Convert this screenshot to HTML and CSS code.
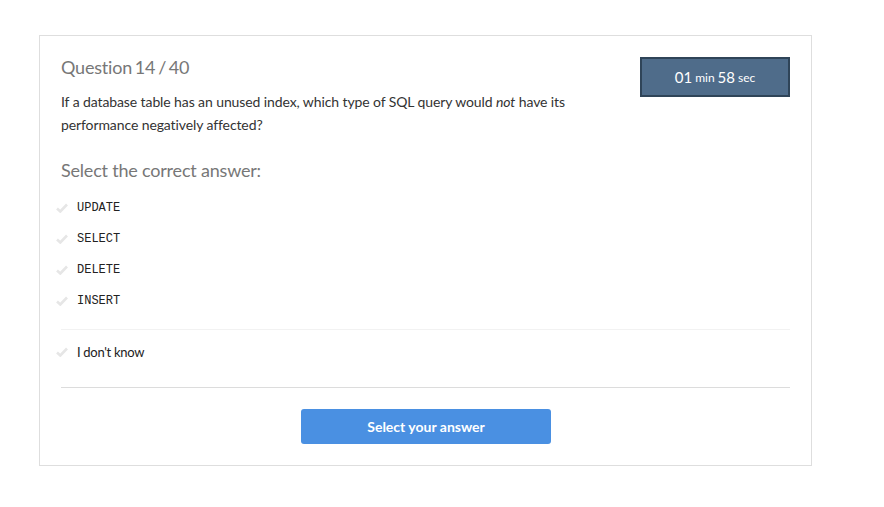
FILE: index.html
```html
<!DOCTYPE html>
<html>
<head>
<meta charset="utf-8">
<link rel="stylesheet" href="styles.css">
</head>
<body>
<div class="card">
  <div class="head">
    <div class="qtext">
      <h1 class="title">Question 14 / 40</h1>
      <p class="prompt">If a database table has an unused index, which type of SQL query would <em>not</em> have its performance negatively affected?</p>
    </div>
    <div class="timer"><span class="num">01</span> <span class="unit">min</span> <span class="num">58</span> <span class="unit">sec</span></div>
  </div>
  <h2 class="sub">Select the correct answer:</h2>
  <ul class="opts">
    <li class="opt"><svg class="chk" viewBox="0 0 12 10"><path d="M1 5.5 L4.3 8.5 L11 1.5" fill="none" stroke="#e6e6e6" stroke-width="2.6"/></svg><span class="code">UPDATE</span></li>
    <li class="opt"><svg class="chk" viewBox="0 0 12 10"><path d="M1 5.5 L4.3 8.5 L11 1.5" fill="none" stroke="#e6e6e6" stroke-width="2.6"/></svg><span class="code">SELECT</span></li>
    <li class="opt"><svg class="chk" viewBox="0 0 12 10"><path d="M1 5.5 L4.3 8.5 L11 1.5" fill="none" stroke="#e6e6e6" stroke-width="2.6"/></svg><span class="code">DELETE</span></li>
    <li class="opt"><svg class="chk" viewBox="0 0 12 10"><path d="M1 5.5 L4.3 8.5 L11 1.5" fill="none" stroke="#e6e6e6" stroke-width="2.6"/></svg><span class="code">INSERT</span></li>
  </ul>
  <div class="dontknow">
    <div class="opt"><svg class="chk" viewBox="0 0 12 10"><path d="M1 5.5 L4.3 8.5 L11 1.5" fill="none" stroke="#e6e6e6" stroke-width="2.6"/></svg><span class="dk">I don't know</span></div>
  </div>
  <div class="foot">
    <button class="btn">Select your answer</button>
  </div>
</div>
</body>
</html>
```
FILE: styles.css
```css
html, body { margin: 0; padding: 0; background: #fff; }
body { font-family: Lato, "Open Sans", sans-serif; color: #333; }
.card {
  box-sizing: border-box;
  width: 773px;
  height: 431px;
  margin: 35px 0 0 39px;
  border: 1px solid #dedede;
  padding: 0 21px 0 21px;
}
.head { display: flex; justify-content: space-between; align-items: flex-start; }
.qtext { width: 545px; }
.title {
  margin: 19px 0 0 0;
  font-size: 18px;
  font-weight: 400;
  color: #777;
  line-height: 24px;
  letter-spacing: -0.2px;
  word-spacing: -1.6px;
}
.prompt {
  margin: 11px 0 0 0;
  font-size: 14px;
  line-height: 23px;
  color: #333;
  letter-spacing: -0.1px;
}
.timer {
  box-sizing: border-box;
  width: 150px;
  height: 40px;
  margin-top: 21px;
  background: #4f6c8a;
  border: 2px solid #2f4458;
  color: #fff;
  display: flex;
  align-items: center;
  justify-content: center;
  gap: 3px;
  white-space: pre;
}
.timer .num { font-size: 15px; }
.timer .unit { font-size: 12px; }
.sub {
  margin: 22px 0 0 0;
  font-size: 18px;
  font-weight: 400;
  color: #777;
  line-height: 24px;
  letter-spacing: -0.2px;
}
.opts { list-style: none; margin: 10px 0 0 0; padding: 0; }
.opt {
  display: flex;
  align-items: center;
  height: 31px;
  margin-left: -5px;
}
.chk { width: 12px; height: 10px; margin-right: 9px; }
.code { font-family: "Liberation Mono", "DejaVu Sans Mono", monospace; font-size: 12px; color: #222; }
.dontknow {
  margin-top: 13px;
  border-top: 1px solid #f2f2f2;
  padding-top: 6px;
  padding-bottom: 20px;
  border-bottom: 1px solid #dcdcdc;
}
.dk { font-size: 13px; color: #222; letter-spacing: -0.3px; }
.foot { display: flex; justify-content: center; padding-top: 21px; }
.btn {
  width: 250px;
  height: 35px;
  padding: 0;
  border: 0;
  border-radius: 3px;
  background: #4a90e2;
  color: #fff;
  font-family: Lato, sans-serif;
  font-weight: 700;
  font-size: 14px;
  line-height: 33px;
  margin-left: 1px;
}
```
